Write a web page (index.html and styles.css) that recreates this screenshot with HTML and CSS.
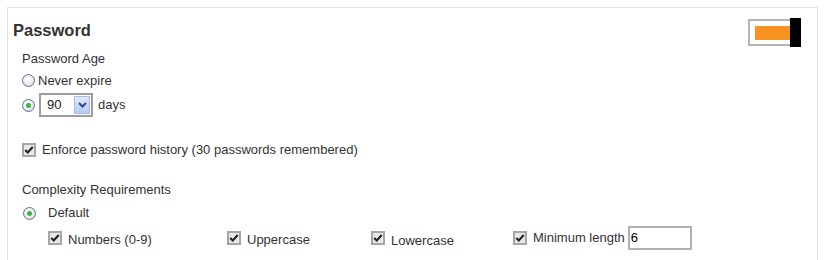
FILE: index.html
```html
<!DOCTYPE html>
<html>
<head>
<meta charset="utf-8">
<link rel="stylesheet" href="styles.css">
</head>
<body>
<div class="panel">
  <div class="header">
    <h2 class="title">Password</h2>
    <div class="toggle"><span class="toggle-track"><span class="toggle-fill"></span></span><span class="toggle-knob"></span></div>
  </div>
  <div class="content">
    <div class="label row-age">Password Age</div>
    <div class="row row-never">
      <span class="radio"></span><span class="text">Never expire</span>
    </div>
    <div class="row row-days">
      <span class="radio on"><span class="dot"></span></span>
      <span class="select"><span class="select-val">90</span><span class="select-btn"><svg width="9" height="6" viewBox="0 0 9 6"><path d="M1 1 L4.5 4.5 L8 1" fill="none" stroke="#2b4f8f" stroke-width="2"/></svg></span></span>
      <span class="text days">days</span>
    </div>
    <div class="row row-history">
      <span class="check"><svg width="12" height="10" viewBox="0 0 12 10"><path d="M1.5 5 L4.5 8 L10.5 1.5" fill="none" stroke="#222" stroke-width="2.6"/></svg></span>
      <span class="text">Enforce password history (30 passwords remembered)</span>
    </div>
    <div class="label row-complex">Complexity Requirements</div>
    <div class="row row-default">
      <span class="radio on"><span class="dot"></span></span><span class="text default">Default</span>
    </div>
    <div class="row row-checks">
      <div class="opt opt-num"><span class="check"><svg width="12" height="10" viewBox="0 0 12 10"><path d="M1.5 5 L4.5 8 L10.5 1.5" fill="none" stroke="#222" stroke-width="2.6"/></svg></span><span class="text">Numbers (0-9)</span></div>
      <div class="opt opt-up"><span class="check"><svg width="12" height="10" viewBox="0 0 12 10"><path d="M1.5 5 L4.5 8 L10.5 1.5" fill="none" stroke="#222" stroke-width="2.6"/></svg></span><span class="text">Uppercase</span></div>
      <div class="opt opt-low"><span class="check"><svg width="12" height="10" viewBox="0 0 12 10"><path d="M1.5 5 L4.5 8 L10.5 1.5" fill="none" stroke="#222" stroke-width="2.6"/></svg></span><span class="text">Lowercase</span></div>
      <div class="opt opt-min"><span class="check"><svg width="12" height="10" viewBox="0 0 12 10"><path d="M1.5 5 L4.5 8 L10.5 1.5" fill="none" stroke="#222" stroke-width="2.6"/></svg></span><span class="text">Minimum length</span><span class="numbox">6</span></div>
    </div>
  </div>
</div>
</body>
</html>
```
FILE: styles.css
```css
html, body { margin: 0; padding: 0; background: #fff; }
body { font-family: "Liberation Sans", Arial, sans-serif; font-size: 13px; color: #333; }
.panel {
  margin: 7px 0 0 7px;
  width: 811px;
  height: 253px;
  border: 1px solid #e4e4e4;
  border-bottom: none;
  box-sizing: border-box;
  overflow: hidden;
}
.header { display: flex; justify-content: space-between; align-items: flex-start; height: 39px; padding: 0 16px 0 5px; }
.title { margin: 13px 0 0 0; font-size: 16.5px; font-weight: bold; color: #333; line-height: 18px; }
.toggle { display: flex; margin-top: 10px; height: 29px; }
.toggle-track { display: flex; align-items: center; width: 42px; height: 27px; margin-top: 1px; box-sizing: border-box; border: 2px solid #b4b4b4; border-right: none; padding-left: 5px; background: #fff; }
.toggle-fill { display: block; width: 35px; height: 14px; background: #f7931e; }
.toggle-knob { display: block; width: 11px; height: 29px; background: #000; }
.content { padding-left: 14px; }
.label { line-height: 16px; }
.row-age { margin-top: 4px; }
.row { display: flex; align-items: center; }
.text { line-height: 16px; }
.row-never { margin-top: 5px; height: 17px; }
.row-never .text { margin-left: 3px; }
.radio { display: inline-flex; align-items: center; justify-content: center; width: 11px; height: 11px; border-radius: 50%; border: 1px solid #5e7591; background: radial-gradient(circle at 45% 40%, #fff 0%, #f0f0f0 45%, #c8ccd2 100%); }
.radio .dot { width: 5px; height: 5px; border-radius: 50%; background: #3fb44a; }
.row-days { margin-top: 4px; height: 24px; }
.select { display: inline-flex; align-items: stretch; margin-left: 4px; width: 54px; height: 24px; box-sizing: border-box; border: 2px solid #9d9d9d; background: #fff; }
.select-val { flex: 1; padding-left: 6px; line-height: 20px; color: #222; }
.select-btn { display: flex; align-items: center; justify-content: center; width: 16px; margin: 1px; background: linear-gradient(#dfe8fb, #b9cbf3); border: 1px solid #a8bce6; box-sizing: border-box; }
.days { margin-left: 5px; }
.row-history { margin-top: 25px; height: 16px; }
.check { display: inline-flex; align-items: center; justify-content: center; width: 14px; height: 14px; box-sizing: border-box; border: 2px solid #a6a6a6; background: #e8e8e8; }
.row-history .text { margin-left: 6px; }
.row-complex { margin-top: 24px; }
.row-default { margin-top: 7px; height: 16px; padding-left: 1px; }
.default { margin-left: 12px; }
.row-checks { margin-top: 5px; height: 24px; padding-left: 26px; }
.opt { display: flex; align-items: center; }
.opt .text { margin-left: 6px; }
.opt-num { width: 179px; }
.opt-up { width: 144px; }
.opt-low { width: 142px; }
.numbox { margin-left: 3px; width: 64px; height: 24px; box-sizing: border-box; border: 2px solid #b0b0b0; line-height: 20px; color: #000; padding-left: 1px; }
.opt-num .text, .opt-up .text, .opt-low .text { position: relative; top: 2px; }
.opt-low .text { top: 3px; }
```
